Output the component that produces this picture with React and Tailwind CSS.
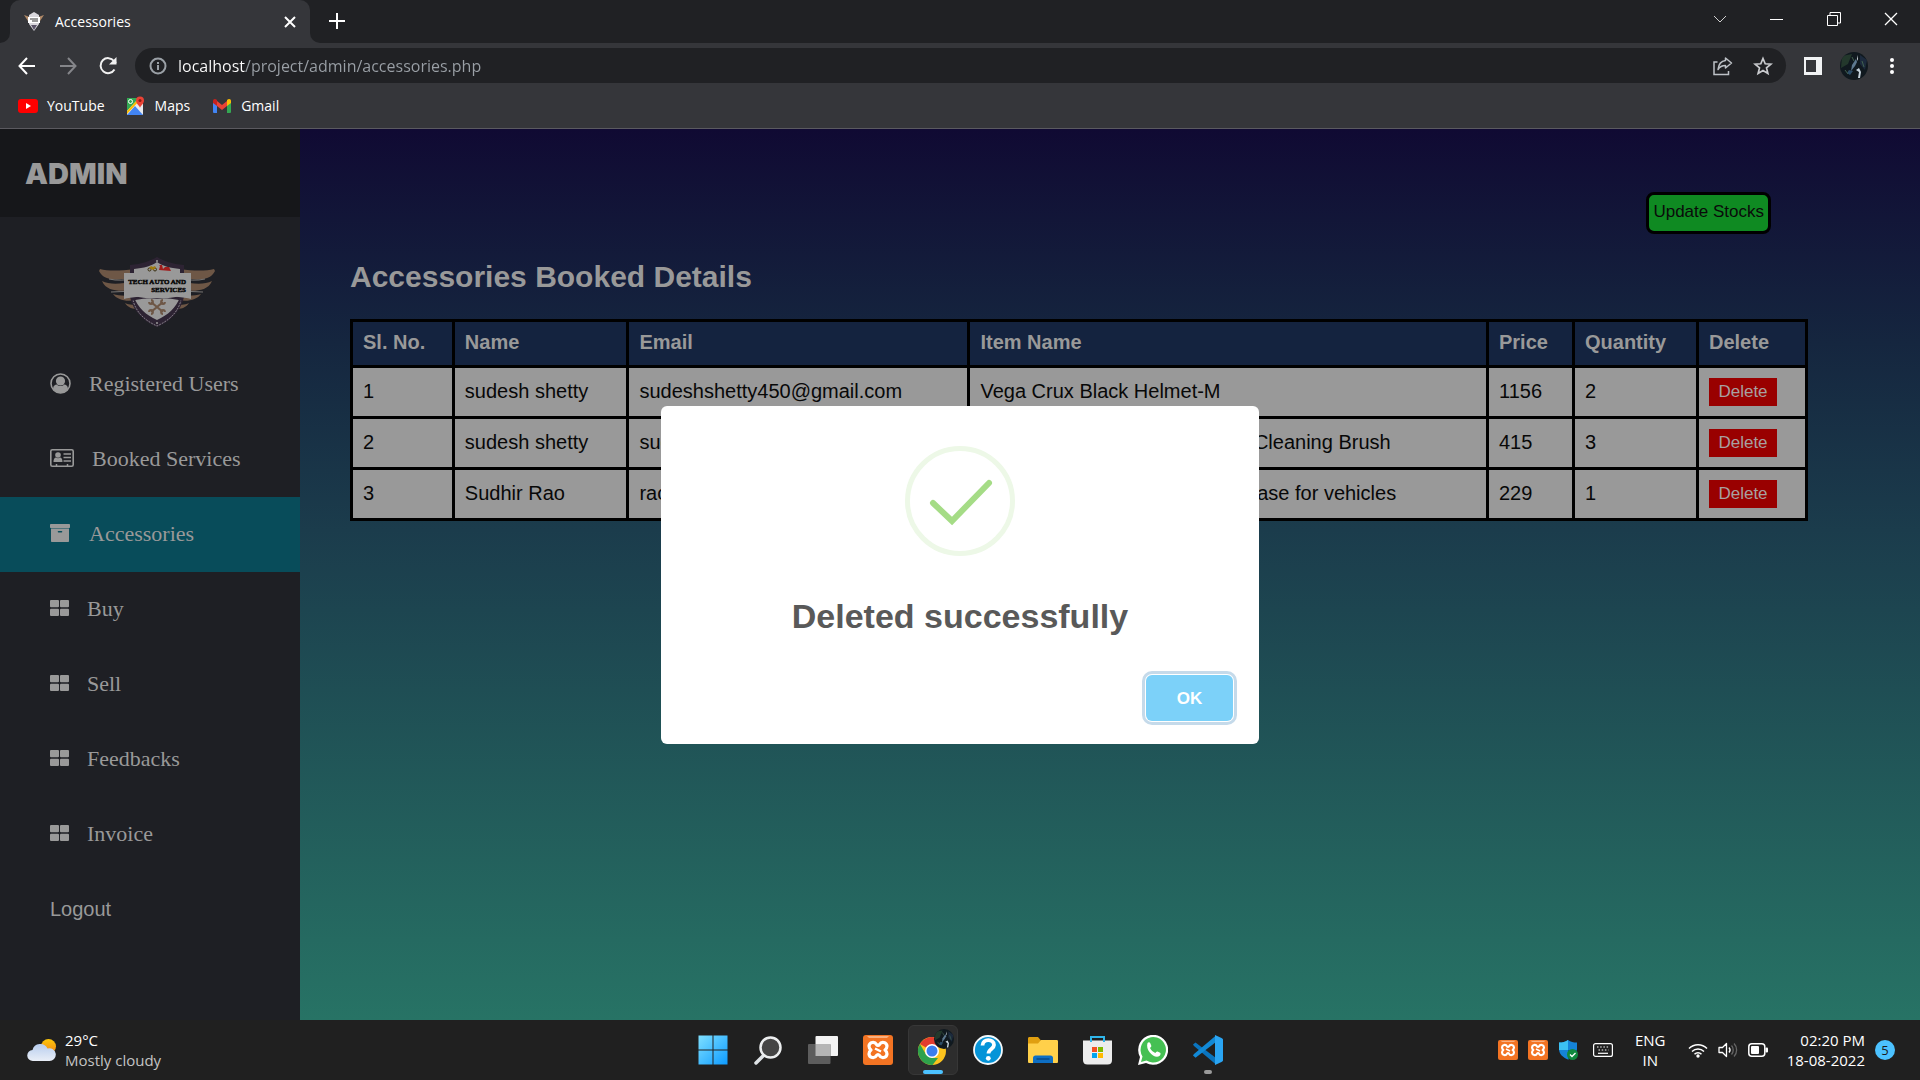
import React from "react";

const ui = "font-['Open_Sans','Noto_Sans',sans-serif]";

/* ---------- browser chrome icons ---------- */
function Favicon() {
  return (
    <svg viewBox="0 0 20 20" className="size-5">
      <path d="M0 3 L6 5 L8 11 L4 9 Z M20 3 L14 5 L12 11 L16 9 Z" fill="#b08968" />
      <path d="M5 3 L10 0 L15 3 L15 12 L10 19 L5 12 Z" fill="#d9d7dc" />
      <path d="M4 5h12v6H4z" fill="#fff" />
      <path d="M6 7h8M8 9h6" stroke="#333" strokeWidth="1" />
      <path d="M7 13 L10 18 L13 13" fill="#5b5468" />
    </svg>
  );
}
function YouTubeIcon() {
  return (
    <svg viewBox="0 0 20 20" className="size-5">
      <rect y="3" width="20" height="14" rx="3" fill="#f00" />
      <path d="M8 7v6l5-3z" fill="#fff" />
    </svg>
  );
}
function MapsIcon() {
  return (
    <svg viewBox="0 0 20 20" className="size-5">
      <rect x="1" y="2" width="16" height="17" rx="1" fill="#e8eaed" />
      <path d="M1 2h12L1 15z" fill="#34a853" />
      <path d="M1 19 9 10l8 9z" fill="#4285f4" />
      <path d="M1 15 13 2l2 1L1 18z" fill="#fbbc04" />
      <circle cx="4.500" cy="5.500" r="2" fill="none" stroke="#fff" />
      <path d="M14 12c0-2-4-4-4-7.500a4 4 0 0 1 8 0C18 8 14 10 14 12z" fill="#ea4335" />
      <circle cx="14" cy="4.500" r="1.500" fill="#8c1d14" />
    </svg>
  );
}
function GmailIcon() {
  return (
    <svg viewBox="0 0 20 20" className="size-5">
      <path d="M1 6v10a1 1 0 0 0 1 1h3V8z" fill="#4285f4" />
      <path d="M19 6v10a1 1 0 0 1-1 1h-3V8z" fill="#34a853" />
      <path d="M5 5l5 4 5-4v5l-5 4-5-4z" fill="#ea4335" />
      <path d="M1 5c0-2 2-3 4-1v6L1 7z" fill="#c5221f" />
      <path d="M19 5c0-2-2-3-4-1v6l4-3z" fill="#fbbc04" />
    </svg>
  );
}
function Avatar({ className }) {
  return (
    <svg viewBox="0 0 28 28" className={className}>
      <defs>
        <clipPath id="face"><circle cx="14" cy="14" r="14" /></clipPath>
      </defs>
      <g clipPath="url(#face)">
        <rect width="28" height="28" fill="#10191f" />
        <path d="M2 4 12 2 8 12 1 16z" fill="#23382c" />
        <path d="M20 3 27 8 25 18 20 12z" fill="#1c2a3d" />
        <path d="M16 7l1 3-2 4-4 5 1-6z" fill="#5d7990" />
        <path d="M19 16l2 4-1 6h-2l1-6-3-2z" fill="#c5d3dd" />
        <path d="M9 18l4 1-3 4-3-2z" fill="#2c4d68" />
        <path d="M17 3l1 4-1 2z" fill="#d5dde2" />
        <path d="M5 18l3 4M22 9l2 6M12 5l2 4" stroke="#40604f" />
      </g>
    </svg>
  );
}

function BrowserChrome() {
  return (
    <header className={`${ui} bg-[#35363a] text-white border-b border-[#5b5a60]`}>
      <div className="flex h-[43px] items-end bg-[#202124]">
        <div className="flex h-[43px] w-[10px] items-end bg-[#35363a]">
          <div className="h-full w-full rounded-br-[10px] bg-[#202124]" />
        </div>
        <div className="flex h-full w-[300px] items-center rounded-t-[10px] bg-[#35363a] pl-[14px] pr-[10px]">
          <Favicon />
          <span className="ml-[11px] flex-1 text-[14px] leading-5">Accessories</span>
          <button aria-label="Close tab" className="flex size-5 items-center justify-center">
            <svg viewBox="0 0 12 12" className="size-3" stroke="#fff" strokeWidth="2"><path d="M1 1l10 10M11 1 1 11" /></svg>
          </button>
        </div>
        <div className="flex h-[43px] w-[10px] bg-[#35363a]">
          <div className="h-full w-full rounded-bl-[10px] bg-[#202124]" />
        </div>
        <button aria-label="New tab" className="mb-3 ml-[7px] flex size-5 items-center justify-center">
          <svg viewBox="0 0 16 16" className="size-4" stroke="#fff" strokeWidth="2"><path d="M8 0v16M0 8h16" /></svg>
        </button>
        <div className="ml-auto flex h-full items-start pr-px pt-[11px]">
          <button aria-label="Search tabs" className="flex h-4 w-[57px] items-center justify-center">
            <svg viewBox="0 0 14 8" className="h-2 w-[14px]" fill="none" stroke="#cfcfcf" strokeWidth="1"><path d="M1 1l6 6 6-6" /></svg>
          </button>
          <button aria-label="Minimize" className="flex h-4 w-[57px] items-center justify-center"><span className="h-px w-[13px] bg-white" /></button>
          <button aria-label="Restore" className="flex h-4 w-[57px] items-center justify-center">
            <svg viewBox="0 0 14 14" className="size-[14px]" fill="none" stroke="#fff"><path d="M.5 3.500h10v10H.5zM3 3V.5h10.500V11H11" /></svg>
          </button>
          <button aria-label="Close" className="flex h-4 w-[57px] items-center justify-center">
            <svg viewBox="0 0 14 14" className="size-[14px]" stroke="#fff" strokeWidth="1.300"><path d="M1 1l12 12M13 1 1 13" /></svg>
          </button>
        </div>
      </div>

      <div className="flex h-[45px] items-center pl-[18px] pr-5">
        <button aria-label="Back" className="size-[18px]">
          <svg viewBox="0 0 18 18" fill="none" stroke="#fff" strokeWidth="2"><path d="M17 9H2M9 1 1.500 9 9 17" /></svg>
        </button>
        <button aria-label="Forward" className="ml-[23px] size-[18px]">
          <svg viewBox="0 0 18 18" fill="none" stroke="#85868a" strokeWidth="2"><path d="M1 9h15M9 1l7.500 8L9 17" /></svg>
        </button>
        <button aria-label="Reload" className="ml-[21px] size-5">
          <svg viewBox="0 0 20 20" fill="none" stroke="#f1f1f1" strokeWidth="2"><path d="M16.500 13.500A7.500 7.500 0 1 1 16 5l2 2" /><path d="M18.500 1v7.500H11z" fill="#f1f1f1" stroke="none" /></svg>
        </button>
        <div className="ml-[17px] flex h-[35px] flex-1 items-center rounded-full bg-[#202124] pl-[14px] pr-[13px]">
          <svg viewBox="0 0 18 18" className="size-[18px]" fill="none" stroke="#9aa0a6" strokeWidth="2"><circle cx="9" cy="9" r="7.500" /><path d="M9 8v5M9 5v2" /></svg>
          <input
            aria-label="Address"
            defaultValue="localhost/project/admin/accessories.php"
            className="ml-[11px] h-full flex-1 bg-[linear-gradient(90deg,#fff_0_67px,#9aa0a6_67px)] bg-clip-text text-[16px] text-transparent outline-none"
          />
          <button aria-label="Share" className="size-5">
            <svg viewBox="0 0 20 20" fill="none" stroke="#bdc1c6" strokeWidth="1.500"><path d="M4.500 6H1v12.500h14.500V15" /><path d="M12.500 2l6 5-6 5V9.500C9 9.500 6.500 11 5 13.500 5.500 9 8 5 12.500 4.500z" strokeLinejoin="round" /></svg>
          </button>
          <button aria-label="Bookmark" className="ml-5 size-5">
            <svg viewBox="0 0 20 20" fill="none" stroke="#c9cbce" strokeWidth="1.700"><path d="M10 2.500l2.200 5.300 5.700.4-4.400 3.700 1.400 5.600L10 14.500l-4.900 3 1.400-5.600L2.100 8.200l5.700-.4z" /></svg>
          </button>
        </div>
        <button aria-label="Side panel" className="ml-[18px] size-[18px]">
          <svg viewBox="0 0 18 18"><path d="M0 0h18v18H0z" fill="#f1f3f4" /><path d="M2 3h10v12H2z" fill="#35363a" /></svg>
        </button>
        <button aria-label="Profile" className="ml-[18px] size-7"><Avatar className="size-7" /></button>
        <button aria-label="Menu" className="ml-5 mr-1 flex w-2 flex-col items-center gap-[2px]">
          <span className="size-1 rounded-full bg-white" /><span className="size-1 rounded-full bg-white" /><span className="size-1 rounded-full bg-white" />
        </button>
      </div>

      <nav className="flex h-[40px] items-start gap-[21px] pl-[18px] pt-2 text-[14px] leading-5">
        <a href="#youtube" className="flex gap-[9px]"><YouTubeIcon />YouTube</a>
        <a href="#maps" className="flex gap-[9px]"><MapsIcon />Maps</a>
        <a href="#gmail" className="flex gap-[9px] pl-px"><GmailIcon />Gmail</a>
      </nav>
    </header>
  );
}

/* ---------- sidebar ---------- */
function UserCircle() {
  return (
    <svg viewBox="0 0 21 21" className="size-[21px]">
      <circle cx="10.500" cy="10.500" r="9.500" fill="none" stroke="#999" strokeWidth="1.600" />
      <circle cx="10.500" cy="8" r="4.600" fill="#999" />
      <path d="M3 15.500c.5-3 2-4 3.800-4 2 2 5.400 2 7.400 0 1.800 0 3.300 1 3.800 4-2 3-4.500 4.500-7.500 4.500S5 18.500 3 15.500z" fill="#999" />
    </svg>
  );
}
function AddressCard() {
  return (
    <svg viewBox="0 0 24 18" className="h-[18px] w-6">
      <rect x=".8" y=".8" width="22.400" height="16.400" rx="1.500" fill="none" stroke="#999" strokeWidth="1.600" />
      <circle cx="8" cy="6" r="2.800" fill="#999" />
      <path d="M3.500 13c0-3 1-4.500 2.500-4.500 1.200 1 2.800 1 4 0 1.500 0 2.500 1.500 2.500 4.500z" fill="#999" />
      <path d="M13.500 5H21M13.500 8.500H21M13.500 12H21M6.500 15v2M17.500 15v2" stroke="#999" strokeWidth="1.500" />
    </svg>
  );
}
function Archive() {
  return (
    <svg viewBox="0 0 21 18" className="h-[18px] w-[21px]" fill="#999">
      <rect x="0" y="0" width="20" height="4" rx=".8" />
      <path fillRule="evenodd" d="M1 4.500h18v12.700a.8.800 0 0 1-.8.800H1.800a.8.800 0 0 1-.8-.8zM8.500 7a.7.700 0 0 0 0 1.600h3a.7.700 0 0 0 0-1.600z" />
    </svg>
  );
}
function Grid() {
  return (
    <svg viewBox="0 0 19 16" className="h-4 w-[19px]" fill="#999">
      <rect width="9" height="7.300" rx="1" /><rect x="10" width="9" height="7.300" rx="1" />
      <rect y="8.700" width="9" height="7.300" rx="1" /><rect x="10" y="8.700" width="9" height="7.300" rx="1" />
    </svg>
  );
}
function Logo() {
  return (
    <svg viewBox="0 0 116 70" className="h-[70px] w-[116px]">
      <g id="wing">
        <path d="M1 12c8 2 20 2 34 0v9C22 22 6 26 0 14z" fill="#6e5746" />
        <path d="M3 24c8 4 20 3 32 0v9C24 34 8 36 3 24z" fill="#6e5746" />
        <path d="M14 37c6 2 14 2 22 1v5C28 45 18 43 14 37z" fill="#6e5746" />
        <path d="M26 46c4 2 8 2 12 1l2 5c-6 0-11-1-14-6z" fill="#6e5746" />
        <path d="M10 22c8 2 16 1 26 0M12 35c8 0 16-1 24-1" stroke="#8f8b88" fill="none" strokeWidth=".8" />
      </g>
      <use href="#wing" transform="translate(116 0) scale(-1 1)" />
      <path d="M31 8c12-1 20-4 27-8 7 4 15 7 27 8v32c-3 14-14 25-27 30C45 65 34 54 31 40z" fill="#2d2333" />
      <path d="M34 43c3 13 13 21 24 26 11-5 21-13 24-26" fill="none" stroke="#8d8a90" strokeWidth=".9" strokeDasharray="2 1" />
      <path d="M35 12c10-1 17-3 23-7 6 4 13 6 23 7v28c-4 11-12 18-23 23C47 58 39 51 35 40z" fill="#999" />
      <path d="M32 38c15 5 37 5 52 0v6c-14-4-38-4-52 0z" fill="#2d2333" />
      <path d="M25 16h67v26c-14-4-53-4-67 0z" fill="#999" />
      <g fill="none" stroke="#3a3010"><circle cx="50.500" cy="12.500" r="1.500" /><circle cx="56" cy="12.500" r="1.500" /></g>
      <path d="M50 11l2-2 2 1 2-1 1 2-3 2z" fill="#a07c10" />
      <path d="M60 13l1-4-1-1h3l1 4 2-2h4l2 4z" fill="#a01c1c" />
      <path d="M52 45l12 10M64 45 52 55" stroke="#6e5746" strokeWidth="2.200" />
      <g fill="none" stroke="#6e5746" strokeWidth="1.800"><path d="M50 45a2 2 0 1 0 2-2M66 45a2 2 0 1 1-2-2M50 55a2 2 0 1 1 2 2M66 55a2 2 0 1 0-2 2" /></g>
      <circle cx="58" cy="4" r="1" fill="#999" /><circle cx="58" cy="66" r="1" fill="#999" />
      <g className="font-['Liberation_Serif',serif] text-[7px] font-bold" fill="#050505" stroke="#050505" strokeWidth=".4" textAnchor="end">
        <text x="87" y="27">TECH AUTO AND</text>
        <text x="87" y="35">SERVICES</text>
      </g>
    </svg>
  );
}

const links = [
  { label: "Registered Users", icon: <UserCircle /> },
  { label: "Booked Services", icon: <AddressCard /> },
  { label: "Accessories", icon: <Archive />, active: true },
  { label: "Buy", icon: <Grid /> },
  { label: "Sell", icon: <Grid /> },
  { label: "Feedbacks", icon: <Grid /> },
  { label: "Invoice", icon: <Grid /> },
];

function Sidebar() {
  return (
    <aside className="w-[300px] shrink-0 bg-[#1e1f24] text-[#999]">
      <div className="flex h-[88px] items-center bg-[#16171a] pl-[25px] pt-0.5">
        <h2 className="font-['Inter',sans-serif] text-[29px] font-black leading-8">ADMIN</h2>
      </div>
      <div className="flex h-[130px] justify-center pl-[14px] pt-10"><Logo /></div>
      <nav className="font-['Liberation_Serif',serif] text-[22px]">
        {links.map((l) => (
          <a
            key={l.label}
            href="#"
            className={`flex h-[75px] items-center gap-[18px] pb-[3px] pl-[50px] ${l.active ? "bg-[#084c5a]" : ""}`}
          >
            {l.icon}
            {l.label}
          </a>
        ))}
        <a href="#" className="flex h-[75px] items-center pb-0.5 pl-[50px] font-['Liberation_Sans',sans-serif] text-[20px]">Logout</a>
      </nav>
    </aside>
  );
}

/* ---------- bookings ---------- */
const rows = [
  ["1", "sudesh shetty", "sudeshshetty450@gmail.com", "Vega Crux Black Helmet-M", "1156", "2"],
  ["2", "sudesh shetty", "sudeshshetty450@gmail.com", "Motorcycle, Bicycle and Chain Cleaning Brush", "415", "3"],
  ["3", "Sudhir Rao", "raosudhir@gmail.com", "First Aid Medical Kit Carrying Case for vehicles", "229", "1"],
];

function Bookings() {
  return (
    <main className="flex-1 bg-[linear-gradient(180deg,#100a33_0%,#15263f_24%,#1b3c4c_45%,#277365_100%)] pt-[63px]">
      <div className="ml-[50px] flex w-[90%] justify-end pr-[37px]">
        <button className="h-[42px] rounded-lg border-[3px] border-black bg-[#0f8a22] px-1 pb-0.5 text-[17px] leading-5 text-[#0a0a0a]">Update Stocks</button>
      </div>
      <h1 className="ml-[50px] mt-[25px] text-[30px] font-bold leading-9 text-[#999]">Accessories Booked Details</h1>
      <table className="ml-[50px] mt-6 w-[90%] table-fixed border-collapse text-left text-[20px] leading-[23px]">
        <colgroup>
          <col className="w-[7%]" /><col className="w-[12%]" /><col className="w-[341px]" /><col />
          <col className="w-[86px]" /><col className="w-[124px]" /><col className="w-[109px]" />
        </colgroup>
        <thead>
          <tr className="h-[46px] bg-[#14233f] text-[#999]">
            {["Sl. No.", "Name", "Email", "Item Name", "Price", "Quantity", "Delete"].map((h) => (
              <th key={h} className="border-[3px] border-black px-[10px] pb-0.5 font-bold">{h}</th>
            ))}
          </tr>
        </thead>
        <tbody>
          {rows.map((r) => (
            <tr key={r[0]} className="h-[51px] bg-[#999] text-[#080808]">
              {r.map((c, i) => (
                <td key={i} className="whitespace-nowrap border-[3px] border-black px-[10px] pb-0.5">{c}</td>
              ))}
              <td className="border-[3px] border-black px-[10px]">
                <button className="block h-7 w-[68px] bg-[#990000] text-[17px] leading-5 text-[#a8a0a0]">Delete</button>
              </td>
            </tr>
          ))}
        </tbody>
      </table>
    </main>
  );
}

function Dialog() {
  return (
    <div className="absolute inset-0 flex items-center justify-center">
      <div role="dialog" aria-labelledby="done" className="flex w-[598px] flex-col items-center rounded-md bg-white pt-10">
        <svg viewBox="0 0 110 110" className="size-[110px]" fill="none">
          <circle cx="55" cy="55" r="52.500" stroke="#edf8e7" strokeWidth="5" />
          <path d="M28 57l19 18 37-38" stroke="#a5dc86" strokeWidth="6" strokeLinecap="round" />
        </svg>
        <h2 id="done" className="mt-10 text-[34px] font-bold leading-10 text-[#595959]">Deleted successfully</h2>
        <button className="mb-[23px] mr-[26px] mt-[39px] h-[46px] w-[87px] self-end rounded-md bg-[#7cd1f9] pt-0.5 text-[17px] font-bold leading-5 text-white shadow-[0_0_0_1px_#fff,0_0_0_4px_#c5daea]">OK</button>
      </div>
    </div>
  );
}

/* ---------- taskbar ---------- */
function Xampp({ className }) {
  return (
    <svg viewBox="0 0 30 30" className={className}>
      <rect width="30" height="30" rx="3" fill="#f37423" />
      <path d="M4 1h22l-2 2H6z" fill="#f9b07f" />
      <path d="M6 11a4 4 0 0 1 7.500-1.500q1.500 2 3 0A4 4 0 0 1 24 11q0 2.500-2 4q2 1.500 2 4a4 4 0 0 1-7.500 1.500q-1.500-2-3 0A4 4 0 0 1 6 19q0-2.500 2-4q-2-1.500-2-4z" fill="none" stroke="#fff" strokeWidth="3.200" strokeLinejoin="round" />
      <path d="M12 13.500l6 3" stroke="#fff" strokeWidth="2.400" />
    </svg>
  );
}
const apps = [
  {
    name: "Start",
    icon: (
      <svg viewBox="0 0 30 30" className="size-[30px]">
        <defs><linearGradient id="win" x1="0" y1="0" x2="1" y2="1"><stop stopColor="#7fe0ff" /><stop offset="1" stopColor="#0d9bff" /></linearGradient></defs>
        <path d="M.5.5H14.500V14.500H.5zM15.500.5H29.500V14.500H15.500zM.5 15.500H14.500V29.500H.5zM15.500 15.500H29.500V29.500H15.500z" fill="url(#win)" />
      </svg>
    ),
  },
  {
    name: "Search",
    icon: (
      <svg viewBox="0 0 30 30" className="size-[30px]">
        <path d="M3 28l8-8" stroke="#dfe3e6" strokeWidth="3.500" strokeLinecap="round" />
        <circle cx="17.500" cy="12.500" r="10" fill="#454545" stroke="#eceeef" strokeWidth="2.500" />
      </svg>
    ),
  },
  {
    name: "Task view",
    icon: (
      <svg viewBox="0 0 30 30" className="size-[30px]">
        <rect x="7.500" y="1" width="22.500" height="20" rx="1" fill="#f3f3f3" />
        <rect x="0" y="9" width="22.500" height="20" rx="1" fill="#5d5d5d" />
        <path d="M7.500 9h15v12h-15z" fill="#b5b5b5" />
      </svg>
    ),
  },
  { name: "XAMPP", icon: <Xampp className="size-[30px]" /> },
  {
    name: "Chrome",
    active: true,
    icon: (
      <svg viewBox="0 0 40 32" className="h-8 w-10">
        <circle cx="19" cy="17" r="14" fill="#fcc31e" />
        <path d="M19 17 6.900 10A14 14 0 0 1 31.100 10z" fill="#e33b2e" />
        <path d="M6.900 10 13 20.500 19 24h6l-5.500 7A14 14 0 0 1 6.900 10z" fill="#2ea24c" />
        <circle cx="19" cy="17" r="7" fill="#fff" />
        <circle cx="19" cy="17" r="5.500" fill="#3b7ded" />
      </svg>
    ),
  },
  {
    name: "Help",
    icon: (
      <svg viewBox="0 0 30 30" className="size-[30px]">
        <circle cx="15" cy="15" r="14" fill="#0594d8" stroke="#f4f8fa" strokeWidth="1.800" />
        <path d="M9.500 10.500c0-7 11.500-7 11.500-.5 0 4-5.500 4-5.500 8.500" fill="none" stroke="#fff" strokeWidth="3.800" />
        <circle cx="15.300" cy="23.300" r="2.400" fill="#fff" />
      </svg>
    ),
  },
  {
    name: "File Explorer",
    icon: (
      <svg viewBox="0 0 30 30" className="size-[30px]">
        <path d="M0 3.500C0 2.500.7 2 1.500 2H10l3 3.500V10H0z" fill="#e09f10" />
        <path d="M0 8.500h10L13 5h15.500c1 0 1.500.5 1.500 1.500v20c0 1-.5 1.500-1.500 1.500h-27C.5 28 0 27.500 0 26.500z" fill="#ffd04a" />
        <path d="M5 28v-5c0-1.500 1-2.500 2.500-2.500h15c1.500 0 2.500 1 2.500 2.500v5z" fill="#0e6fc4" />
        <path d="M8.500 24h13" stroke="#083f77" strokeWidth="1.200" />
      </svg>
    ),
  },
  {
    name: "Microsoft Store",
    icon: (
      <svg viewBox="0 0 30 30" className="size-[30px]">
        <path d="M0 5.500h29V25c0 3-1.500 4.500-4.500 4.500h-20C1.500 29.500 0 28 0 25z" fill="#ececec" />
        <path d="M8 7V2h13v5" fill="none" stroke="#2fb6ea" strokeWidth="2" />
        <path d="M9 12h5v5H9z" fill="#f25022" /><path d="M15 12h5v5h-5z" fill="#7fba00" />
        <path d="M9 18h5v5H9z" fill="#00a4ef" /><path d="M15 18h5v5h-5z" fill="#ffb900" />
      </svg>
    ),
  },
  {
    name: "WhatsApp",
    icon: (
      <svg viewBox="0 0 30 30" className="size-[30px]">
        <path d="M0 30l2-8A15 15 0 1 1 8 28z" fill="#fff" />
        <path d="M3 27l1.500-5.500A12.700 12.700 0 1 1 8.500 25.500z" fill="#45c053" />
        <path d="M9.500 8c1-1.200 2.200-1 2.800.2l1 2.600c.2 1-.8 1.500-1.300 2.200 1 2.200 3 4 5.300 5 .8-.6 1.200-1.800 2.200-1.500l2.600 1.300c.8.500.5 2-.4 2.900-4.500 4-14.700-4.700-12.200-12.700z" fill="#fff" />
      </svg>
    ),
  },
  {
    name: "Visual Studio Code",
    dot: true,
    icon: (
      <svg viewBox="0 0 30 30" className="size-[30px]">
        <path d="M0 9.500 2.500 7.500 23 23v6.500L1 11z" fill="#0a74be" />
        <path d="M0 20.500l2.500 2.300L23 7V.5L1 19z" fill="#1289d6" />
        <path d="M22 0l6.500 3c1 .5 1.500 1 1.500 2v20c0 1-.5 1.500-1.500 2L22 30z" fill="#2aa5f3" />
      </svg>
    ),
  },
];

function Taskbar() {
  return (
    <footer className={`${ui} grid h-[60px] grid-cols-[1fr_auto_1fr] items-center bg-[#202020] text-[15px] leading-5 text-white`}>
      <div className="flex items-center pl-[27px]">
        <svg viewBox="0 0 29 24" className="h-6 w-[29px]">
          <defs><linearGradient id="sun" x1="0" y1="0" x2="0" y2="1"><stop stopColor="#fdc70a" /><stop offset="1" stopColor="#f08418" /></linearGradient>
            <linearGradient id="cloud" x1="0" y1="0" x2="0" y2="1"><stop stopColor="#b7cdee" /><stop offset="1" stopColor="#e9eef7" /></linearGradient></defs>
          <circle cx="21.500" cy="8.500" r="7.500" fill="url(#sun)" />
          <path d="M6 23a5.500 5.500 0 0 1-.5-11 8 8 0 0 1 15-1.500A6.400 6.400 0 1 1 22 23z" fill="url(#cloud)" />
        </svg>
        <div className="ml-[9px]"><div>29°C</div><div className="text-[#c4c4c4]">Mostly cloudy</div></div>
      </div>

      <div className="flex gap-[5px]">
        {apps.map((a) => (
          <button
            key={a.name}
            aria-label={a.name}
            className={`relative flex size-[50px] items-center justify-center rounded-md ${a.active ? "border border-[#373737] bg-[#2d2d2d]" : ""}`}
          >
            {a.icon}
            {a.active && <Avatar className="absolute right-[3px] top-[3px] size-5" />}
            {a.active && <span className="absolute bottom-0 h-1 w-5 rounded-full bg-[#4cc2ff]" />}
            {a.dot && <span className="absolute bottom-px h-1 w-2 rounded-full bg-[#9a9a9a]" />}
          </button>
        ))}
      </div>

      <div className="flex items-center justify-end pr-[25px]">
        <Xampp className="size-5" />
        <Xampp className="ml-[10px] size-5" />
        <svg viewBox="0 0 20 20" className="ml-[10px] size-5">
          <path d="M10 0c3 2 5 2.500 9 2.500V9c0 5-4 8.500-9 10.500C5 17.500 1 14 1 9V2.500C5 2.500 7 2 10 0z" fill="#1583d8" />
          <path d="M10 0v10H1V2.500C5 2.500 7 2 10 0z" fill="#3cc1f2" /><path d="M10 10h9c-.5 5-4 7.500-9 9.500z" fill="#0a4f9f" />
          <circle cx="14.500" cy="14.500" r="5.500" fill="#10893e" /><path d="M12 14.500l2 2 3.500-3.500" stroke="#fff" fill="none" strokeWidth="1.300" />
        </svg>
        <svg viewBox="0 0 20 14" className="ml-[15px] h-[14px] w-5" fill="none" stroke="#fff" strokeWidth="1.200">
          <rect x=".6" y=".6" width="18.800" height="12.800" rx="2" /><path d="M4 4h12M5.500 7h10" strokeDasharray="1.500 1.700" /><path d="M5 10.300h10" />
        </svg>
        <div className="w-[75px] text-center">ENG<br />IN</div>
        <svg viewBox="0 0 20 16" className="h-4 w-5" fill="none" stroke="#fff" strokeWidth="1.500">
          <path d="M1 6.500a12.500 12.500 0 0 1 18 0M4 9.500a8.500 8.500 0 0 1 12 0M6.500 12.300a5 5 0 0 1 7 0" /><circle cx="10" cy="14" r="1.700" fill="#fff" stroke="none" />
        </svg>
        <svg viewBox="0 0 20 16" className="ml-[10px] h-4 w-5" fill="none" stroke="#fff" strokeWidth="1.300">
          <path d="M1 5.500h3.500L8.500 1.500v13L4.500 10.500H1z" strokeLinejoin="round" /><path d="M11 5.500c1.300 1.500 1.300 3.500 0 5" /><path d="M13.500 3.500c2.300 2.500 2.300 6.500 0 9M16 1.500c3.500 3.500 3.500 9.500 0 13" stroke="#666" />
        </svg>
        <svg viewBox="0 0 20 14" className="ml-[10px] h-[14px] w-5">
          <rect x=".8" y=".8" width="16" height="12.400" rx="3" fill="none" stroke="#fff" strokeWidth="1.500" />
          <rect x="3" y="3" width="8" height="8" rx="1" fill="#fff" /><rect x="17.500" y="4.500" width="2.500" height="5" rx="1" fill="#fff" />
        </svg>
        <div className="ml-[19px] text-right">02:20 PM<br />18-08-2022</div>
        <span className="ml-[10px] flex size-5 items-center justify-center rounded-full bg-[#4cc2ff] text-[13px] text-[#1b1b1b]">5</span>
      </div>
    </footer>
  );
}

export default function App() {
  return (
    <div className="flex min-h-screen flex-col bg-[#202020] font-['Liberation_Sans',sans-serif]">
      <BrowserChrome />
      <div className="relative flex flex-1">
        <Sidebar />
        <Bookings />
        <Dialog />
      </div>
      <Taskbar />
    </div>
  );
}
